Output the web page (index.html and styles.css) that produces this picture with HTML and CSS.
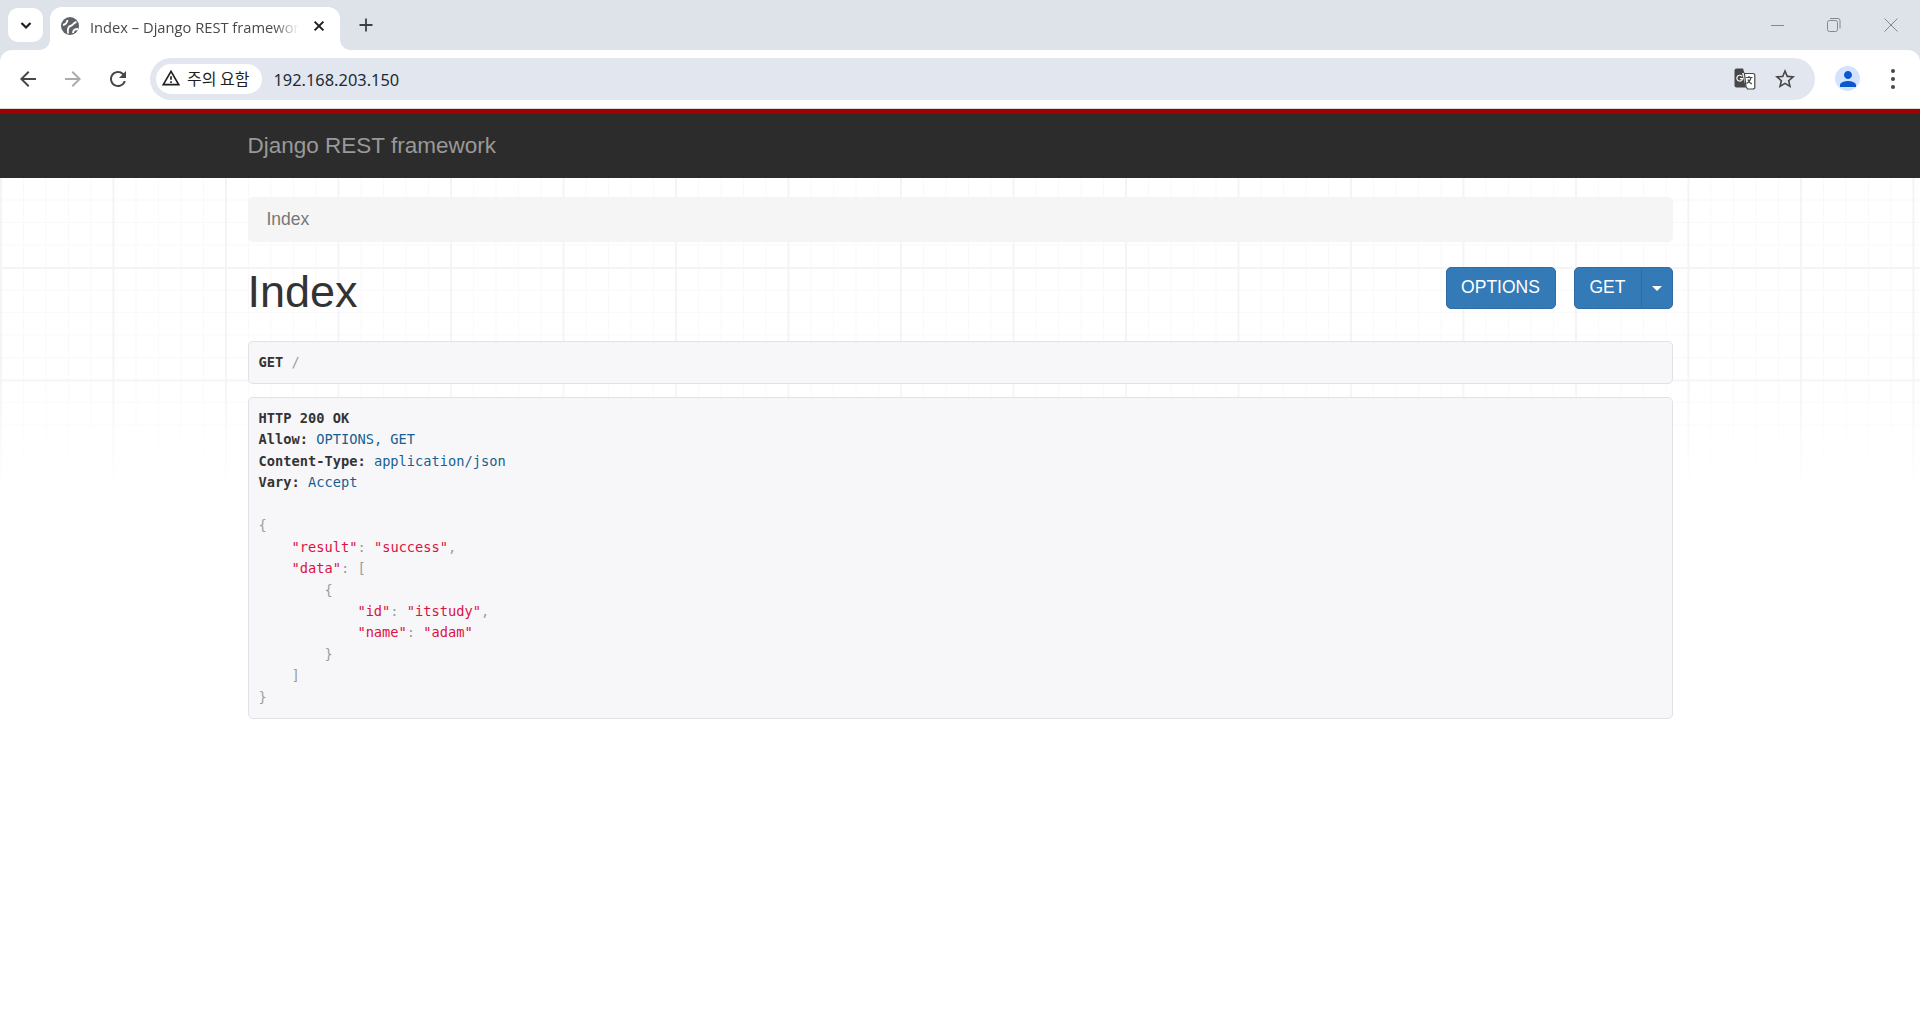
FILE: index.html
```html
<!DOCTYPE html>
<html lang="en">
<head>
<meta charset="utf-8">
<title>Index – Django REST framework</title>
<link rel="stylesheet" href="styles.css">
</head>
<body>
<header class="browser">
  <div class="tabstrip">
    <button class="tab-search" aria-label="Search tabs">
      <svg width="16" height="16" viewBox="0 0 16 16"><path d="M3.500 6 8 10.500 12.500 6" fill="none" stroke="#1f1f1f" stroke-width="2.200"/></svg>
    </button>
    <div class="tab">
      <svg class="favicon" width="18" height="18" viewBox="0 0 18 18"><circle cx="9" cy="9" r="9" fill="#5f6368"/><path d="M15.500 5C12.500 5.500 12 8.500 9.500 9C7 9.500 6.500 12 7 16.500M2 8C4.500 7.500 6 6 6.500 3M12 16C12 13.500 14 12 17 12" fill="none" stroke="#fff" stroke-width="1.800"/></svg>
      <span class="tab-title">Index – Django REST framework</span>
      <svg class="tab-close" width="14" height="14" viewBox="0 0 14 14"><path d="M2.600 2.600 11.400 11.400M11.400 2.600 2.600 11.400" stroke="#1f1f1f" stroke-width="2"/></svg>
    </div>
    <svg class="new-tab" width="16" height="16" viewBox="0 0 16 16"><path d="M8 1.500v13M1.500 8h13" stroke="#3c4043" stroke-width="1.800"/></svg>
    <div class="window-controls">
      <svg width="14" height="14" viewBox="0 0 14 14"><path d="M0 7.500h13" stroke="#85888c" stroke-width="1"/></svg>
      <svg width="14" height="14" viewBox="0 0 14 14"><rect x=".5" y="2.500" width="10" height="11" rx="2" fill="none" stroke="#85888c"/><path d="M3 .5h8a2 2 0 0 1 2 2v8" fill="none" stroke="#85888c"/></svg>
      <svg width="14" height="14" viewBox="0 0 14 14"><path d="M.5.5l13 13M13.500.5l-13 13" stroke="#85888c" stroke-width="1"/></svg>
    </div>
  </div>
  <div class="toolbar">
    <svg class="nav-icon" width="24" height="24" viewBox="0 0 24 24"><path d="M20 11H7.830l5.590-5.590L12 4l-8 8 8 8 1.410-1.410L7.830 13H20z" fill="#474747"/></svg>
    <svg class="nav-icon" width="24" height="24" viewBox="0 0 24 24"><path d="M4 11h12.170l-5.590-5.590L12 4l8 8-8 8-1.410-1.410L16.170 13H4z" fill="#a9abae"/></svg>
    <svg class="nav-icon" width="24" height="24" viewBox="0 0 24 24"><path d="M17.650 6.350A7.958 7.958 0 0 0 12 4c-4.420 0-7.990 3.580-7.990 8s3.570 8 7.990 8c3.730 0 6.840-2.550 7.730-6h-2.080A5.990 5.990 0 0 1 12 18c-3.310 0-6-2.690-6-6s2.690-6 6-6c1.660 0 3.140.690 4.220 1.780L13 11h7V4z" fill="#474747"/></svg>
    <div class="omnibox">
      <div class="chip">
        <svg width="20" height="20" viewBox="0 0 24 24"><path d="M1 21h22L12 2zm3.470-2L12 5.990 19.530 19zM11 10v4h2v-4zm0 6v2h2v-2z" fill="#1f1f1f"/></svg>
        <span>주의 요함</span>
      </div>
      <span class="url">192.168.203.150</span>
      <svg class="translate" width="22" height="22" viewBox="0 0 22 22"><path d="M2.500 0.500h6.500l1.500 4.500h-2.500l4 14.500h-9.500a2 2 0 0 1-2-2V2.500a2 2 0 0 1 2-2z" fill="#474747"/><path d="M10.500 5.500h8.500a1.800 1.800 0 0 1 1.800 1.800v11.900a1.800 1.800 0 0 1-1.800 1.800h-5.500l-1.500-2.500z" fill="#fff" stroke="#474747" stroke-width="1.200"/><path d="M12 9.500h6.500M15 8v1.500M17 9.500c-.5 2.500-2.500 5-4.500 6M13.800 11.500c.8 2 2.500 3.800 4.200 4.500" fill="none" stroke="#474747" stroke-width="1.200"/><path d="M8 8.300a2.900 2.900 0 1 0 .6 2.400H5.800" fill="none" stroke="#fff" stroke-width="1.200"/></svg>
      <svg class="star" width="24" height="24" viewBox="0 0 24 24"><path d="M22 9.240l-7.190-.620L12 2 9.190 8.630 2 9.240l5.460 4.730L5.820 21 12 17.270 18.180 21l-1.630-7.030zM12 15.400l-3.760 2.270 1-4.280-3.320-2.880 4.380-.380L12 6.100l1.710 4.040 4.380.380-3.320 2.880 1 4.280z" fill="#474747"/></svg>
    </div>
    <div class="avatar">
      <svg viewBox="4 4 16 16"><path d="M12 12c2.210 0 4-1.790 4-4s-1.790-4-4-4-4 1.790-4 4 1.790 4 4 4zm0 2c-2.670 0-8 1.340-8 4v2h16v-2c0-2.660-5.330-4-8-4z" fill="#0b57d0"/></svg>
    </div>
    <div class="kebab"><i></i><i></i><i></i></div>
  </div>
</header>

<div class="site">
  <nav class="navbar">
    <div class="container"><a class="brand">Django REST framework</a></div>
  </nav>
  <main class="content">
    <div class="container">
      <div class="breadcrumb">Index</div>
      <div class="region">
        <h1>Index</h1>
        <div class="actions">
          <button class="btn">OPTIONS</button>
          <div class="btn-group">
            <button class="btn btn-main">GET</button>
            <button class="btn btn-caret" aria-label="More formats"><span class="caret"></span></button>
          </div>
        </div>
      </div>
      <pre class="well request"><b>GET</b> <span class="pun">/</span></pre>
      <pre class="well response"><b>HTTP 200 OK</b>
<b>Allow:</b> <span class="lit">OPTIONS, GET</span>
<b>Content-Type:</b> <span class="lit">application/json</span>
<b>Vary:</b> <span class="lit">Accept</span>

<span class="pun">{</span>
    <span class="str">"result"</span><span class="pun">:</span> <span class="str">"success"</span><span class="pun">,</span>
    <span class="str">"data"</span><span class="pun">: [</span>
        <span class="pun">{</span>
            <span class="str">"id"</span><span class="pun">:</span> <span class="str">"itstudy"</span><span class="pun">,</span>
            <span class="str">"name"</span><span class="pun">:</span> <span class="str">"adam"</span>
        <span class="pun">}</span>
    <span class="pun">]</span>
<span class="pun">}</span></pre>
    </div>
  </main>
</div>
</body>
</html>
```

FILE: styles.css
```css
* { box-sizing: border-box; }
html, body { margin: 0; height: 100%; }
body {
  display: flex;
  flex-direction: column;
  height: 1020px;
  overflow: hidden;
  background: #fff;
  font-family: "Liberation Sans", Arial, sans-serif;
}

/* Browser frame */
.browser { flex: none; background: #dee3ea; }
.tabstrip {
  display: flex;
  align-items: flex-start;
  height: 50px;
  padding: 8px 0 0 8px;
}
.tab-search {
  display: flex;
  align-items: center;
  justify-content: center;
  width: 35px;
  height: 34px;
  padding: 0;
  border: 0;
  border-radius: 10px;
  background: #fff;
}
.tab {
  position: relative;
  display: flex;
  align-items: center;
  width: 290px;
  height: 43px;
  margin: -1px 0 0 7px;
  padding: 0 14px 6px 11px;
  background: #fff;
  border-radius: 12px 12px 0 0;
}
.tab::before, .tab::after {
  content: "";
  position: absolute;
  bottom: 0;
  width: 10px;
  height: 10px;
}
.tab::before { left: -10px; background: radial-gradient(circle at 0 0, transparent 9.500px, #fff 10px); }
.tab::after { right: -10px; background: radial-gradient(circle at 100% 0, transparent 9.500px, #fff 10px); }
.favicon { flex: none; }
.tab-title {
  flex: 1;
  min-width: 0;
  margin: 3px 0 0 11px;
  overflow: hidden;
  white-space: nowrap;
  font: 14.700px "Open Sans", "Noto Sans", sans-serif;
  color: #46494d;
  -webkit-mask-image: linear-gradient(to right, #000 88%, transparent 100%);
  mask-image: linear-gradient(to right, #000 88%, transparent 100%);
}
.tab-close { flex: none; margin-left: 13px; }
.new-tab { flex: none; margin: 9px 0 0 18px; }
.window-controls {
  display: flex;
  gap: 42px;
  margin: 10px 22px 0 auto;
}
.window-controls svg:nth-child(1) { transform: translateX(-1px); }
.window-controls svg:nth-child(2) { transform: translateX(-1px); }

.toolbar {
  display: flex;
  align-items: center;
  height: 59px;
  padding: 0 18px 1px 16px;
  background: #fff;
  border-radius: 12px 12px 0 0;
  border-bottom: 1px solid #d9d9d9;
}
.nav-icon { flex: none; margin-right: 21px; }
.nav-icon:nth-child(3) { margin-right: 20px; }
.omnibox {
  display: flex;
  flex: 1;
  align-items: center;
  height: 42px;
  padding: 0 18px 0 6px;
  background: #e2e7ef;
  border-radius: 21px;
}
.chip {
  display: flex;
  align-items: center;
  gap: 6px;
  height: 30px;
  padding: 0 13px 2px 5px;
  background: #fff;
  border-radius: 15px;
  font: 16px "Noto Sans CJK KR", sans-serif;
  color: #1f1f1f;
}
.url {
  flex: 1;
  margin: 1px 0 0 11px;
  font: 16.400px "Noto Sans", sans-serif;
  color: #1f2a37;
}
.translate { flex: none; margin-right: 17px; }
.star { flex: none; }
.avatar {
  display: flex;
  flex: none;
  align-items: center;
  justify-content: center;
  width: 25px;
  height: 25px;
  margin-left: 20px;
  overflow: hidden;
  background: #d3e3fd;
  border-radius: 50%;
}
.avatar svg { width: 16px; height: 16px; }
.kebab {
  display: flex;
  flex: none;
  flex-direction: column;
  gap: 4px;
  margin-left: 31px;
  margin-right: 7px;
}
.kebab i { width: 4px; height: 4px; background: #474747; border-radius: 50%; }

/* Page */
.site { flex: 1; min-height: 0; }
.navbar {
  height: 69px;
  background: #2c2c2c;
  border-top: 5px solid #a30000;
}
.container { width: 1425px; margin: 0 auto; }
.brand {
  display: block;
  padding-top: 19px;
  font-size: 22.500px;
  line-height: 25px;
  color: #999;
}
.content { position: relative; height: 842px; }
.content::before {
  content: "";
  position: absolute;
  top: 0;
  left: 0;
  right: 0;
  height: 312px;
  background-image:
    linear-gradient(to bottom, rgba(255,255,255,0) 60%, #fff 100%),
    linear-gradient(to right, #f4f4f6 1.500px, transparent 1.500px),
    linear-gradient(to bottom, #f4f4f6 1.500px, transparent 1.500px),
    linear-gradient(to right, #f9f9fa 1px, transparent 1px),
    linear-gradient(to bottom, #f9f9fa 1px, transparent 1px);
  background-size: 100% 100%, 112.500px 100%, 100% 112.500px, 22.500px 100%, 100% 22.500px;
  background-position: 0 0, 0 0, 0 89px, 0.500px 0, 0 21.500px;
}
.content .container { position: relative; padding-top: 19px; }
.breadcrumb {
  height: 45px;
  padding: 10px 19px;
  background: #f5f5f5;
  border-radius: 5px;
  font-size: 17.500px;
  line-height: 25px;
  color: #777;
}
.region {
  display: flex;
  justify-content: space-between;
  height: 99px;
}
h1 {
  margin: 25px 0 0;
  font-size: 45px;
  font-weight: 400;
  line-height: 50px;
  color: #333;
}
.actions { display: flex; gap: 18px; padding-top: 25px; }
.btn-group { display: flex; }
.btn {
  height: 42px;
  width: 110px;
  padding: 0 0 2px;
  border: 1.250px solid #2e6da4;
  border-radius: 5px;
  background: #337ab7;
  color: #fff;
  font: 17.500px "Liberation Sans", Arial, sans-serif;
}
.btn-main { width: 68px; border-radius: 5px 0 0 5px; }
.btn-caret {
  display: flex;
  align-items: center;
  justify-content: center;
  width: 32px;
  padding: 0 0 0 1px;
  margin-left: -1px;
  border-radius: 0 5px 5px 0;
}
.caret {
  width: 0;
  height: 0;
  border-top: 5px solid #fff;
  border-left: 5px solid transparent;
  border-right: 5px solid transparent;
}
.well {
  margin: 0;
  padding: 10px 10px 10px 10px;
  background: #f7f7f9;
  border: 1.250px solid #e1e1e8;
  border-radius: 5px;
  font: 13.700px/21.430px "DejaVu Sans Mono", monospace;
  color: #48484c;
  white-space: pre;
}
.well b { color: #333; }
.request { height: 43px; margin-bottom: 13px; }
.response { height: 322px; }
.lit { color: #195f91; }
.str { color: #dd1144; }
.pun { color: #93a1a1; }
```
